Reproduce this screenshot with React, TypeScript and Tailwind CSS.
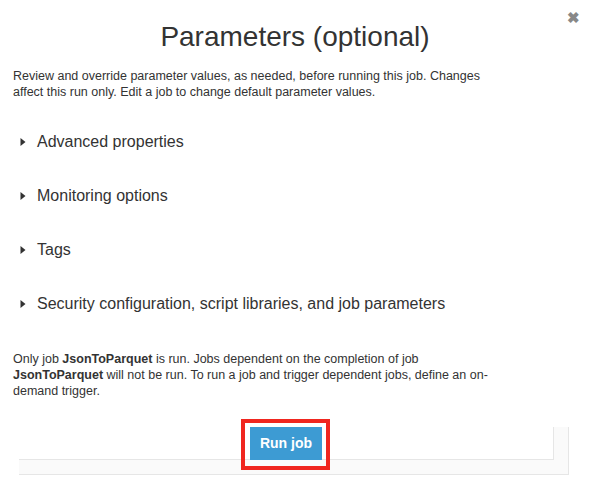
import React from "react";

function Caret() {
  return (
    <svg width="6" height="10" viewBox="0 0 6 10" className="shrink-0">
      <path d="M0.5 1 L5.5 5 L0.5 9 Z" fill="#333" />
    </svg>
  );
}

const sections = [
  "Advanced properties",
  "Monitoring options",
  "Tags",
  "Security configuration, script libraries, and job parameters",
];

export default function App() {
  return (
    <div
      className="relative w-[590px] h-[483px] bg-white text-[#333] overflow-hidden"
      style={{ fontFamily: '"Liberation Sans", Arial, sans-serif' }}
    >
      <button className="absolute right-[10px] top-[10px] text-[#888] text-[15px] leading-none font-bold">
        ✖
      </button>
      <div className="px-[13px] pt-[19px]">
        <h1 className="text-center text-[28px] leading-[36px] font-normal">
          Parameters (optional)
        </h1>
        <p className="mt-[13px] w-[482px] text-[12.5px] leading-[16px]">
          Review and override parameter values, as needed, before running this
          job. Changes affect this run only. Edit a job to change default
          parameter values.
        </p>
        <div className="mt-[15px] flex flex-col">
          {sections.map((s) => (
            <div key={s} className="flex items-center gap-[11px] h-[54px] pl-[7px]">
              <Caret />
              <span className="text-[16px] leading-[20px]">{s}</span>
            </div>
          ))}
        </div>
        <p className="mt-[20px] w-[482px] text-[12.5px] leading-[16px]">
          Only job <b>JsonToParquet</b> is run. Jobs dependent on the completion
          of job <b>JsonToParquet</b> will not be run. To run a job and trigger
          dependent jobs, define an on-demand trigger.
        </p>
      </div>
      <div className="absolute left-[19px] top-[427px] w-[550px] h-[48px] bg-[#fafafa] border-r border-b border-[#e6e6e6]">
        <div className="w-[535px] h-[33px] bg-white border-r border-b border-[#e6e6e6]" />
      </div>
      <div className="absolute left-[241px] top-[419px] w-[89px] h-[51px] border-4 border-[#f0261f] pl-[5px] pt-[4px]">
        <button className="w-[72px] h-[33px] bg-[#3d9bd3] text-white font-bold text-[14px]">
          Run job
        </button>
      </div>
    </div>
  );
}
